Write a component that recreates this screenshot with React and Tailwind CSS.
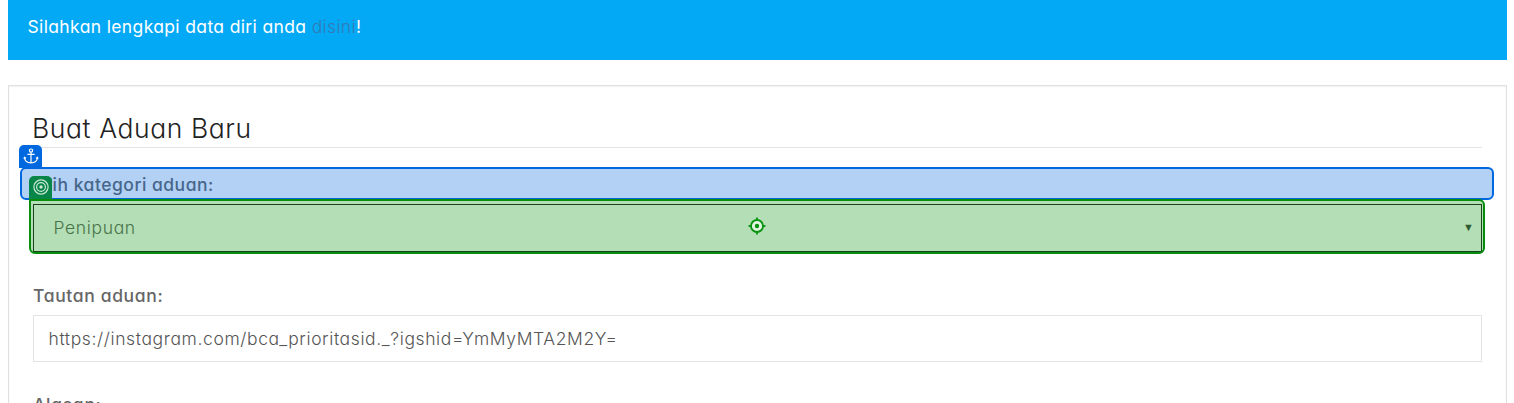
function AnchorIcon() {
  return (
    <svg className="-mt-px h-4 w-4" viewBox="0 0 16 16" fill="none" stroke="#fff" strokeWidth="1.2">
      <circle cx="8" cy="2.6" r="1.6" />
      <path d="M8 4.2V15M4.400 6.400h7.200M1.500 9.600c.4 3.400 3 5.200 6.500 5.200s6.100-1.800 6.500-5.200M.9 10.800l.6-1.400 1.500.9M15.100 10.800l-.6-1.400-1.500.9" />
    </svg>
  );
}

function TargetIcon() {
  return (
    <svg className="-mt-px h-4 w-4" viewBox="0 0 16 16" fill="none" stroke="#c9e8d5" strokeWidth="1.2">
      <circle cx="8" cy="8" r="7.1" />
      <circle cx="8" cy="8" r="4.4" />
      <circle cx="8" cy="8" r="1.7" fill="#c9e8d5" stroke="none" />
    </svg>
  );
}

function CrosshairIcon() {
  return (
    <svg className="mb-[2px] h-[18px] w-[18px]" viewBox="0 0 18 18" fill="none" stroke="#07930f" strokeWidth="1.800">
      <circle cx="9" cy="9" r="6" fill="#e2f3e2" />
      <path d="M9 .6V3M9 15v2.400M.6 9H3M15 9h2.400" />
      <circle cx="9" cy="9" r="2.200" fill="#07930f" stroke="none" />
    </svg>
  );
}

export default function App() {
  return (
    <div className="h-[403px] overflow-hidden bg-white pr-[7px] pl-2 font-['Inter',sans-serif] text-[#666] [font-feature-settings:'cv11']">
      <div className="h-[60px] bg-[#04a9f5] pl-[19.5px] text-[17.5px] leading-[54px] whitespace-nowrap text-white">
        <span className="tracking-[0.36px]">
          Silahkan lengkapi data diri anda <a className="font-light text-[#337ab7]">disini</a>!
        </span>
      </div>

      <div className="mt-[25px] h-[340px] border border-[#e0e0e0] px-6 shadow-[inset_0_1px_2px_rgba(0,0,0,0.06)]">
        <h1 className="h-[62px] border-b border-[#e3e3e3] pt-6 text-[26.5px] leading-9 font-light tracking-[0.6px] whitespace-nowrap text-[#222]">
          <span className="-ml-px">Buat Aduan Baru</span>
        </h1>

        <div className="relative mt-5 h-[31px]">
          <label className="block text-[17.5px] leading-[33px] font-medium tracking-[0.5px] whitespace-nowrap">
            <span className="tracking-[-0.15px]">Pil</span>ih kategori aduan:
          </label>
          <div className="absolute -top-px -right-3 -left-[13px] h-[33px] rounded-md border-[2.5px] border-[#0068df] bg-[#0066dd]/30" />
          <div className="absolute -top-[23px] -left-[14px] flex h-[23px] w-[23px] items-center justify-center rounded-t-[5px] bg-[#0068df]">
            <AnchorIcon />
          </div>
        </div>

        <div className="relative mt-[5px] h-12">
          <div className="flex h-12 items-center justify-between border border-[#222] pr-[7px] pl-[19.5px] text-[17.5px] font-light">
            <span className="tracking-[0.65px]">Penipuan</span>
            <span className="font-['DejaVu_Sans',sans-serif] text-[11px] text-[#444]">▼</span>
          </div>
          <div className="absolute -top-[5px] -right-[3px] -left-[4px] flex h-[55px] items-center justify-center rounded-md rounded-tl-none border-[2.5px] border-[#078c0d] bg-[#08910a]/30">
            <CrosshairIcon />
          </div>
          <div className="absolute -top-7 -left-[4px] flex h-[23px] w-[23px] items-center justify-center rounded-t-[5px] bg-[#088548]">
            <TargetIcon />
          </div>
        </div>

        <div className="mt-8">
          <label className="block h-[31px] text-[17.5px] leading-6 font-medium tracking-[0.64px] whitespace-nowrap">Tautan aduan:</label>
          <div className="flex h-[47px] items-center border border-[#e3e3e3] pt-[2px] pl-[14.5px] text-[17.5px] font-light tracking-[0.62px] whitespace-nowrap text-[#555]">
            https://instagram.com/bca_prioritasid._?igshid=YmMyMTA2M2Y=
          </div>
        </div>

        <label className="mt-[31px] block text-[17.5px] leading-6 font-medium tracking-[0.7px]">Alasan:</label>
      </div>
    </div>
  );
}
